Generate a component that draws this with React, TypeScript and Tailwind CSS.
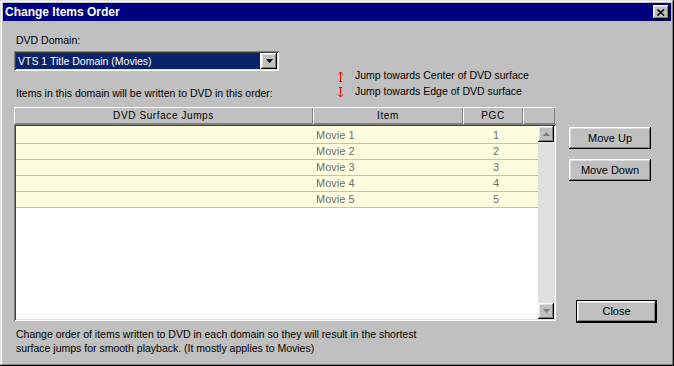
const raised =
  "shadow-[inset_-1px_-1px_#000,inset_1px_1px_#fff,inset_-2px_-2px_#808080,inset_2px_2px_#dfdfdf]";

const rows = [1, 2, 3, 4, 5];

function JumpArrow({ up }: { up: boolean }) {
  return (
    <svg width="7" height="11" viewBox="0 0 7 11" className="shrink-0">
      <g stroke="#ff0000" strokeWidth="1" fill="none" shapeRendering="crispEdges">
        <path d="M3.5 1V10" />
        {up ? (
          <>
            <path d="M1 3.5L3.5 1L6 3.5" shapeRendering="auto" />
            <path d="M2 10.5H5" />
          </>
        ) : (
          <>
            <path d="M2 0.5H5" />
            <path d="M1 7.5L3.5 10L6 7.5" shapeRendering="auto" />
          </>
        )}
      </g>
    </svg>
  );
}

function ScrollArrow({ up }: { up: boolean }) {
  return (
    <div className={`w-4 h-4 bg-[#c0c0c0] flex items-center justify-center ${raised}`}>
      <svg width="7" height="4" viewBox="0 0 7 4">
        <path d={up ? "M0 4L3.5 0L7 4Z" : "M0 0L3.5 4L7 0Z"} fill="#808080" />
      </svg>
    </div>
  );
}

export default function App() {
  return (
    <div className="w-[674px] h-[366px] bg-[#c0c0c0] p-[3px] flex flex-col font-['Liberation_Sans',Arial,sans-serif] text-[10.5px] text-black shadow-[inset_-1px_-1px_#000,inset_1px_1px_#dfdfdf,inset_-2px_-2px_#808080,inset_2px_2px_#fff]">
      {/* title bar */}
      <div className="h-[18px] bg-[#000080] flex items-center justify-between pl-[2px] pr-[2px]">
        <span className="text-white font-bold text-[12px] leading-none">Change Items Order</span>
        <button className={`w-4 h-[14px] bg-[#c0c0c0] flex items-center justify-center ${raised}`}>
          <svg width="8" height="7" viewBox="0 0 8 7">
            <path d="M0.5 0.5L7 6.5M7 0.5L0.5 6.5" stroke="#000" strokeWidth="1.6" />
          </svg>
        </button>
      </div>

      <div className="flex-1 flex">
        {/* left column */}
        <div className="ml-[11px] w-[542px] flex flex-col">
          <div className="mt-[13px] leading-[13px] pl-[2px]">DVD Domain:</div>
          <div className="mt-[4px] h-[56px] flex">
            <div className="w-[265px] flex flex-col">
              <div className="h-5 bg-white flex p-[2px] shadow-[inset_1px_1px_#808080,inset_-1px_-1px_#fff,inset_2px_2px_#404040,inset_-2px_-2px_#dfdfdf]">
                <div className="flex-1 bg-[#0a246a] text-white leading-[16px] pl-[2px] mr-[1px] whitespace-nowrap">
                  VTS 1 Title Domain (Movies)
                </div>
                <div className={`w-4 h-4 bg-[#c0c0c0] flex items-center justify-center ${raised}`}>
                  <svg width="7" height="4" viewBox="0 0 7 4">
                    <path d="M0 0L3.5 4L7 0Z" fill="#000" />
                  </svg>
                </div>
              </div>
              <div className="mt-[16px] leading-[13px] pl-[2px] whitespace-nowrap">
                Items in this domain will be written to DVD in this order:
              </div>
            </div>
            <div className="ml-[58px] mt-[17px] flex flex-col">
              <div className="h-4 flex items-center gap-[11px] whitespace-nowrap">
                <JumpArrow up />
                <span>Jump towards Center of DVD surface</span>
              </div>
              <div className="h-4 flex items-center gap-[11px] whitespace-nowrap">
                <JumpArrow up={false} />
                <span>Jump towards Edge of DVD surface</span>
              </div>
            </div>
          </div>

          {/* header */}
          <div className="h-[17px] w-[541px] flex text-[10px] tracking-[0.6px]">
            {[
              ["DVD Surface Jumps", "w-[299px]"],
              ["Item", "w-[150px]"],
              ["PGC", "w-[60px]"],
              ["", "flex-1"],
            ].map(([label, w], i) => (
              <div
                key={i}
                className={`${w} flex items-center justify-center shadow-[inset_1px_1px_#fff,inset_-1px_-1px_#808080]`}
              >
                {label}
              </div>
            ))}
          </div>

          {/* list */}
          <div className="h-[197px] flex p-[2px] bg-white shadow-[inset_1px_1px_#808080,inset_-1px_-1px_#fff,inset_2px_2px_#404040,inset_-2px_-2px_#dfdfdf]">
            <div className="flex-1 flex flex-col bg-white">
              {rows.map((n) => (
                <div
                  key={n}
                  className={`flex bg-[#ffffe0] border-b border-[#c0c0c0] text-[#6e6e6e] text-[11px] ${
                    n === 1 ? "h-[18px] pt-[2px]" : "h-4"
                  }`}
                >
                  <div className="w-[297px]" />
                  <div className="w-[150px] pl-[3px] leading-[15px]">Movie {n}</div>
                  <div className="w-[60px] text-right pr-[24px] leading-[15px]">{n}</div>
                </div>
              ))}
            </div>
            <div className="w-4 bg-[#e0e0e0] flex flex-col justify-between">
              <ScrollArrow up />
              <ScrollArrow up={false} />
            </div>
          </div>

          <div className="mt-[6px] leading-[14px] pl-[2px] whitespace-nowrap">
            Change order of items written to DVD in each domain so they will result in the shortest
            <br />
            surface jumps for smooth playback. (It mostly applies to Movies)
          </div>
        </div>

        {/* right column */}
        <div className="ml-[13px] flex flex-col pb-[40px] text-[11px]">
          <button className={`mt-[106px] w-[82px] h-[22px] bg-[#c0c0c0] ${raised}`}>Move Up</button>
          <button className={`mt-[10px] w-[82px] h-[22px] bg-[#c0c0c0] ${raised}`}>Move Down</button>
          <button
            className={`mt-auto ml-[7px] w-[81px] h-[23px] bg-[#c0c0c0] border border-black ${raised}`}
          >
            Close
          </button>
        </div>
      </div>
    </div>
  );
}
